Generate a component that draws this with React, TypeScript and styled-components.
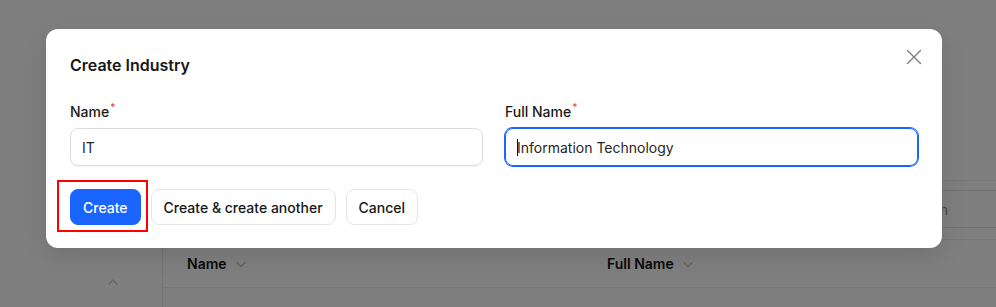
import React from "react";
import styled, { createGlobalStyle } from "styled-components";

const GlobalStyle = createGlobalStyle`
  html, body {
    margin: 0;
    padding: 0;
    background: #ffffff;
    font-family: Inter, "Noto Sans", "Liberation Sans", sans-serif;
    color: #171717;
  }
  * {
    box-sizing: border-box;
  }
`;

const Page = styled.div`
  position: relative;
  width: 996px;
  height: 307px;
  overflow: hidden;
  display: flex;
  flex-direction: column;
  background: #fff;
`;

const TopArea = styled.div`
  height: 180px;
  flex-shrink: 0;
`;

const Body = styled.div`
  flex: 1;
  display: flex;
`;

const Sidebar = styled.aside`
  width: 163px;
  flex-shrink: 0;
  border-right: 1px solid #e8e8e8;
  display: flex;
  justify-content: flex-end;
  padding: 96px 43px 0 0;
  color: #c8c8c8;
`;

const Main = styled.main`
  flex: 1;
  display: flex;
  flex-direction: column;
`;

const Toolbar = styled.div`
  border-top: 1px solid #ececec;
  padding: 9px 0 11px 24px;
`;

const SearchBox = styled.div`
  height: 38px;
  border-top: 1px solid #e5e5e5;
  border-bottom: 1px solid #e5e5e5;
  display: flex;
  align-items: center;
  justify-content: flex-end;
  padding-right: 48px;
  font-size: 14px;
  color: #8d8d8d;
`;

const TableHead = styled.div`
  height: 49px;
  border-top: 1px solid #ececec;
  border-bottom: 1px solid #ececec;
  display: grid;
  grid-template-columns: 420px 1fr;
  align-items: center;
  padding-left: 24px;
`;

const HeadCell = styled.div`
  display: flex;
  align-items: center;
  gap: 8px;
  font-size: 14px;
  font-weight: 600;
  color: #111;
`;

const SortIcon = styled.span`
  display: flex;
  color: #c4c4c4;
`;

const Overlay = styled.div`
  position: absolute;
  inset: 0;
  background: rgba(0, 0, 0, 0.5);
  padding: 29px 0 0 46px;
`;

const Modal = styled.div`
  width: 896px;
  background: #fff;
  border-radius: 12px;
  box-shadow: 0 8px 24px rgba(0, 0, 0, 0.12);
  padding: 24px 24px 23px;
`;

const ModalHeader = styled.div`
  display: flex;
  align-items: center;
  justify-content: space-between;
  height: 24px;
`;

const Title = styled.h2`
  margin: 0;
  font-size: 16px;
  line-height: 24px;
  font-weight: 600;
  color: #171717;
`;

const CloseButton = styled.button`
  border: none;
  background: none;
  padding: 0;
  margin: -16px -4px 0 0;
  width: 16px;
  height: 16px;
  display: flex;
  align-items: center;
  justify-content: center;
  color: #7a7a7a;
  cursor: pointer;
`;

const FormGrid = styled.div`
  display: grid;
  grid-template-columns: 1fr 1fr;
  gap: 22px;
  margin-top: 25px;
`;

const Field = styled.div`
  display: flex;
  flex-direction: column;
  gap: 6px;
`;

const Label = styled.label`
  font-size: 14px;
  line-height: 20px;
  font-weight: 500;
  color: #1a1a1a;
`;

const Required = styled.sup`
  color: #e5484d;
  font-size: 10px;
  margin-left: 1px;
  vertical-align: 6px;
  line-height: 0;
`;

const InputBox = styled.div<{ $focused?: boolean }>`
  height: 38px;
  border-radius: 8px;
  border: 1px solid ${(p) => (p.$focused ? "#1a65ff" : "#dcdcdc")};
  box-shadow: ${(p) =>
    p.$focused ? "0 0 0 1px #1a65ff" : "0 1px 1px rgba(0,0,0,0.04)"};
  display: flex;
  align-items: center;
  padding: 0 12px 0 11px;
  font-size: 14px;
  color: #262626;
`;

const Caret = styled.span`
  width: 1px;
  height: 17px;
  background: #111;
  margin-right: -1px;
`;

const Actions = styled.div`
  display: flex;
  gap: 10px;
  margin-top: 23px;
`;

const Highlight = styled.div`
  position: relative;

  &::after {
    content: "";
    position: absolute;
    top: -9px;
    left: -13px;
    right: -7px;
    bottom: -7px;
    border: 2px solid #ff0000;
    pointer-events: none;
  }
`;

const Button = styled.button<{ $primary?: boolean }>`
  height: 36px;
  padding: 0 12px;
  border-radius: 8px;
  font-family: inherit;
  font-size: 14px;
  font-weight: 500;
  cursor: pointer;
  border: 1px solid ${(p) => (p.$primary ? "#1a65ff" : "#e5e5e5")};
  background: ${(p) => (p.$primary ? "#1a65ff" : "#ffffff")};
  color: ${(p) => (p.$primary ? "#ffffff" : "#171717")};
`;

const Chevron = ({ up }: { up?: boolean }) => (
  <svg width="12" height="12" viewBox="0 0 12 12" fill="none">
    <path
      d={up ? "M2 8l4-4 4 4" : "M2 4.5l4 4 4-4"}
      stroke="currentColor"
      strokeWidth="1.3"
      strokeLinecap="round"
      strokeLinejoin="round"
    />
  </svg>
);

export default function App() {
  return (
    <>
      <GlobalStyle />
      <Page>
        <TopArea />
        <Body>
          <Sidebar>
            <Chevron up />
          </Sidebar>
          <Main>
            <Toolbar>
              <SearchBox>Selection</SearchBox>
            </Toolbar>
            <TableHead>
              <HeadCell>
                Name
                <SortIcon>
                  <Chevron />
                </SortIcon>
              </HeadCell>
              <HeadCell>
                Full Name
                <SortIcon>
                  <Chevron />
                </SortIcon>
              </HeadCell>
            </TableHead>
          </Main>
        </Body>

        <Overlay>
          <Modal>
            <ModalHeader>
              <Title>Create Industry</Title>
              <CloseButton aria-label="Close">
                <svg width="16" height="16" viewBox="0 0 16 16" fill="none">
                  <path
                    d="M1.5 1.5l13 13M14.5 1.5l-13 13"
                    stroke="currentColor"
                    strokeWidth="1.3"
                    strokeLinecap="round"
                  />
                </svg>
              </CloseButton>
            </ModalHeader>

            <FormGrid>
              <Field>
                <Label>
                  Name<Required>*</Required>
                </Label>
                <InputBox>IT</InputBox>
              </Field>
              <Field>
                <Label>
                  Full Name<Required>*</Required>
                </Label>
                <InputBox $focused>
                  <Caret />
                  Information Technology
                </InputBox>
              </Field>
            </FormGrid>

            <Actions>
              <Highlight>
                <Button $primary>Create</Button>
              </Highlight>
              <Button>Create &amp; create another</Button>
              <Button>Cancel</Button>
            </Actions>
          </Modal>
        </Overlay>
      </Page>
    </>
  );
}
